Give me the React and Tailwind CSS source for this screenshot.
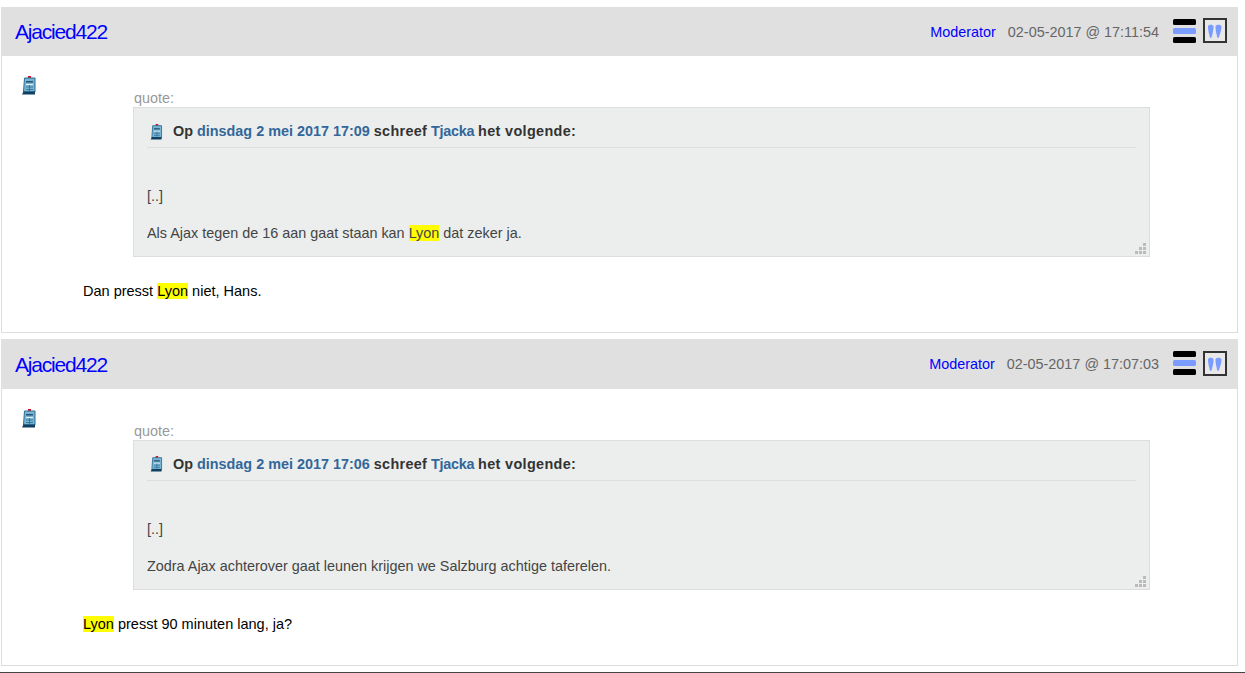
import React from 'react';

const posts = [
    {
        id: 1,
        date: '02-05-2017 @ 17:11:54',
        quoteTime: '17:09',
        quoteBody: <>Als Ajax tegen de 16 aan gaat staan kan <mark className="bg-[#ffff00] text-[#444444]">Lyon</mark> dat zeker ja.</>,
        body: <>Dan presst <mark className="bg-[#ffff00] text-black">Lyon</mark> niet, Hans.</>,
    },
    {
        id: 2,
        date: '02-05-2017 @ 17:07:03',
        quoteTime: '17:06',
        quoteBody: <>Zodra Ajax achterover gaat leunen krijgen we Salzburg achtige taferelen.</>,
        body: <><mark className="bg-[#ffff00] text-black">Lyon</mark> presst 90 minuten lang, ja?</>,
    },
];

const NoteIcon = ({ className }) => (
    <svg viewBox="0 0 14 19" className={className}>
        <rect x="6" y="0" width="3" height="2.5" fill="#e01020" />
        <path d="M2.5 2 H13 V16 H1.5 Z" fill="#79b4d2" stroke="#2a6d94" strokeWidth="1" />
        <rect x="4" y="5" width="7" height="1.5" fill="#1d5375" />
        <rect x="4" y="8" width="7" height="1" fill="#e4f1f7" />
        <path d="M4 11 H11 M4 13.5 H11 M7.5 9 V15" stroke="#2a6d94" strokeWidth="0.8" />
        <path d="M0 18.5 L1.5 15.5 H13 V18.5 Z" fill="#0f3f60" />
    </svg>
);

const MenuIcon = () => (
    <svg viewBox="0 0 23 24" className="h-6 w-[23px] shrink-0 blur-[0.6px]">
        <rect x="0" y="0" width="23" height="6" rx="1.5" fill="#000" />
        <rect x="0" y="9" width="23" height="6" rx="1.5" fill="#7a9cff" />
        <rect x="0" y="18" width="23" height="6" rx="1.5" fill="#000" />
    </svg>
);

const QuoteIcon = () => (
    <svg viewBox="0 0 24 25" className="h-[25px] w-6 shrink-0 blur-[0.5px]">
        <rect x="1" y="1" width="22" height="23" fill="#e8e8e8" stroke="#333" strokeWidth="2" />
        <path d="M5 8.5 C5 6 10.5 6 10.5 8.5 C10.5 12 9.5 16 8.7 19 C8.3 20.3 7.2 20.3 6.8 19 C6 16 5 12 5 8.5 Z" fill="#7a9cff" />
        <path d="M12.5 8.5 C12.5 6 18.5 6 18.5 8.5 C18.5 12 17 16 16 19 C15.5 20.3 14.5 20.3 14.2 19 C13.5 16 12.5 12 12.5 8.5 Z" fill="#7a9cff" />
    </svg>
);

const ResizeGrip = () => (
    <div className="absolute bottom-[2px] right-[3px] grid grid-cols-3 gap-px">
        {[0, 0, 1, 0, 1, 1, 1, 1, 1].map((on, i) => (
            <span key={i} className={on ? 'h-[3px] w-[3px] bg-[#bbbbbb]' : 'h-[3px] w-[3px]'} />
        ))}
    </div>
);

const Post = ({ post }) => (
    <div className="h-[326.5px] w-[1237px] ml-px">
        <div className="flex h-[49.5px] items-center bg-[#e0e0e0] pl-[14px] pr-[11px]">
            <a className="text-[21px] leading-none tracking-[-1.2px] text-[#0000ff]">Ajacied422</a>
            <a className="ml-auto pt-[2.5px] text-[14.4px] text-[#0000ff]">Moderator</a>
            <span className="ml-[12px] pt-[2.5px] text-[14.4px] text-[#666666]">{post.date}</span>
            <div className="-mt-[2px] ml-[14px] flex items-center gap-[7px]">
                <MenuIcon />
                <QuoteIcon />
            </div>
        </div>
        <div className="h-[277px] border-x border-b border-[#dddddd] pt-5 pl-5">
            <NoteIcon className="-mb-[4px] h-[19px] w-[14px]" />
            <div className="ml-[111px] w-[1017px]">
                <div className="h-4 pl-px text-[14.4px] leading-[14px] text-[#999999]">quote:</div>
                <div className="relative h-[150px] border border-[#dddddd] bg-[#ebeeed] px-[13px] text-[14.4px] text-[#444444]">
                    <div className="flex h-[40px] items-center gap-[10px] border-b border-[#dddddd] pl-[3px] pt-[9px] font-bold text-[#333333]">
                        <NoteIcon className="-mt-px h-[16px] w-[13px]" />
                        <span>Op <a className="text-[#336699]">dinsdag 2 mei 2017 {post.quoteTime}</a> <span className="tracking-[0.3px]">schreef</span> <a className="tracking-[-0.3px] text-[#336699]">Tjacka</a> <span className="tracking-[0.35px]">het volgende:</span></span>
                    </div>
                    <p className="mt-[39px] leading-[18px]">[..]</p>
                    <p className="mt-[19px] leading-[18px]">{post.quoteBody}</p>
                    <ResizeGrip />
                </div>
            </div>
            <p className="ml-[61px] mt-[25px] text-[14.5px] leading-[18px] text-black">{post.body}</p>
        </div>
    </div>
);

const App = () => {
    return (
        <div className="min-h-[673px] bg-white pt-[6.75px] font-['Liberation_Sans',Arial,sans-serif]">
            <div className="flex flex-col gap-[6px]">
                {posts.map(post => <Post key={post.id} post={post} />)}
            </div>
            <div className="mt-[6px] h-px bg-[#444444]" />
        </div>
    );
};

export default App;
